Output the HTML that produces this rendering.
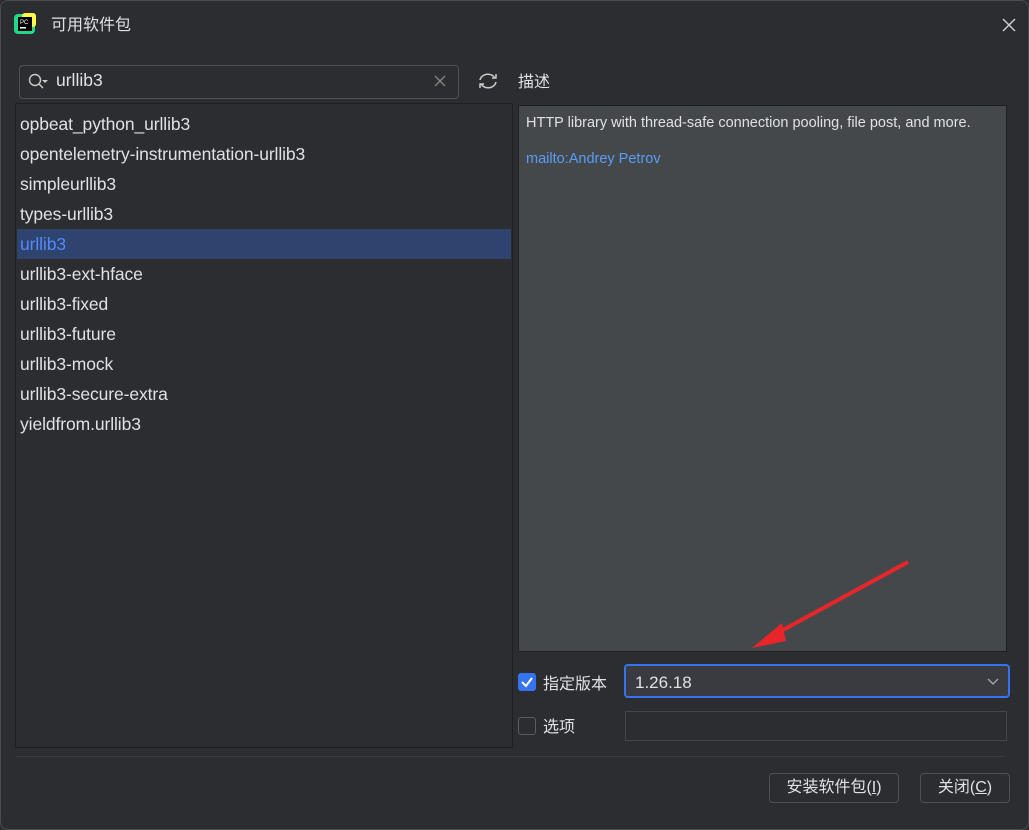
<!DOCTYPE html>
<html><head><meta charset="utf-8"><style>
*{box-sizing:border-box;margin:0;padding:0}
body{width:1029px;height:830px;background:#2b2d30;font-family:"Liberation Sans","Noto Sans CJK SC",sans-serif;color:#dfe1e5;position:relative;overflow:hidden;font-size:16px}
.a{position:absolute}
.row{position:absolute;left:1px;right:1px;height:30px;line-height:30px;padding-left:3px;font-size:17.5px;letter-spacing:-0.1px}
</style></head><body>
<div class="a" style="left:0;top:0;width:1029px;height:830px;border:1px solid #4a4c50;border-radius:8px"></div>
<svg class="a" style="left:14px;top:13px" width="22" height="22"><rect x="0" y="1" width="21" height="20" rx="4" fill="#21d789"/><rect x="8" y="0" width="14" height="14" rx="3" fill="#fcf84a"/><rect x="4" y="4" width="14" height="14" fill="#000"/><text x="6" y="11" font-size="6" fill="#fff" font-family="Liberation Sans">PC</text><rect x="6" y="14" width="6" height="1.5" fill="#fff"/></svg>
<div class="a" style="left:51px;top:11px;font-size:16px">可用软件包</div>
<svg class="a" style="left:1001px;top:17px" width="16" height="16"><path d="M2 2L14 14M14 2L2 14" stroke="#ccc" stroke-width="1.5"/></svg>
<div class="a" style="left:19px;top:65px;width:440px;height:34px;border:1px solid #4e5157;border-radius:4px;background:#2b2d30"></div>
<svg class="a" style="left:27px;top:72px" width="24" height="20"><circle cx="8" cy="8" r="5.5" stroke="#ccc" stroke-width="1.4" fill="none"/><path d="M12 12L16 16" stroke="#ccc" stroke-width="1.4"/><path d="M15 8L21 8L18 11Z" fill="#ccc"/></svg>
<div class="a" style="left:56px;top:70px;font-size:17.5px">urllib3</div>
<svg class="a" style="left:434px;top:75px" width="12" height="12"><path d="M1 1L11 11M11 1L1 11" stroke="#888" stroke-width="1.3"/></svg>
<svg class="a" style="left:477px;top:71px" width="22" height="20"><path d="M3 9A8 7 0 0 1 18 7M19 11A8 7 0 0 1 4 13" stroke="#ccc" stroke-width="1.5" fill="none"/><path d="M15 7L19 7L19 3M7 13L3 13L3 17" stroke="#ccc" stroke-width="1.5" fill="none"/></svg>
<div class="a" style="left:15px;top:103px;width:498px;height:645px;border:1px solid #1e1f22;background:#2b2d30">
<div class="row" style="top:5px">opbeat_python_urllib3</div>
<div class="row" style="top:35px">opentelemetry-instrumentation-urllib3</div>
<div class="row" style="top:65px">simpleurllib3</div>
<div class="row" style="top:95px">types-urllib3</div>
<div class="row" style="top:125px;background:#2e436e;color:#548af7">urllib3</div>
<div class="row" style="top:155px">urllib3-ext-hface</div>
<div class="row" style="top:185px">urllib3-fixed</div>
<div class="row" style="top:215px">urllib3-future</div>
<div class="row" style="top:245px">urllib3-mock</div>
<div class="row" style="top:275px">urllib3-secure-extra</div>
<div class="row" style="top:305px">yieldfrom.urllib3</div>
</div>
<div class="a" style="left:518px;top:68px;font-size:16px">描述</div>
<div class="a" style="left:518px;top:105px;width:489px;height:547px;background:#45484a;border:1px solid #1e1f22;padding:9px 7px;font-size:14.5px">
<div>HTTP library with thread-safe connection pooling, file post, and more.</div>
<div style="color:#589df6;margin-top:20px">mailto:Andrey Petrov</div>
</div>
<svg class="a" style="left:740px;top:555px" width="180" height="100"><path d="M168 7L30 82" stroke="#e8262a" stroke-width="4"/><path d="M12 93L42 68L46 86Z" fill="#e8262a"/></svg>
<div class="a" style="left:518px;top:673px;width:18px;height:18px;background:#3574f0;border-radius:3px"></div>
<svg class="a" style="left:518px;top:673px" width="18" height="18"><path d="M4 9L8 13L14 5" stroke="#fff" stroke-width="2" fill="none"/></svg>
<div class="a" style="left:543px;top:670px;font-size:16px">指定版本</div>
<div class="a" style="left:624px;top:664px;width:386px;height:34px;border:2px solid #3574f0;border-radius:4px;background:#393b40;padding-left:9px;line-height:34px;font-size:17px">1.26.18</div>
<svg class="a" style="left:986px;top:677px" width="14" height="10"><path d="M2 2L7 7L12 2" stroke="#aaa" stroke-width="1.3" fill="none"/></svg>
<div class="a" style="left:518px;top:717px;width:18px;height:18px;border:1px solid #5a5d63;border-radius:3px"></div>
<div class="a" style="left:543px;top:713px;font-size:16px">选项</div>
<div class="a" style="left:625px;top:711px;width:382px;height:30px;border:1px solid #43454a;background:#2b2d30"></div>
<div class="a" style="left:15px;top:756px;width:990px;height:1px;background:#393b40"></div>
<div class="a" style="left:769px;top:773px;width:130px;height:30px;border:1px solid #4e5157;border-radius:4px;text-align:center;line-height:28px;font-size:16px">安装软件包(<u>I</u>)</div>
<div class="a" style="left:920px;top:773px;width:90px;height:30px;border:1px solid #4e5157;border-radius:4px;text-align:center;line-height:28px;font-size:16px">关闭(<u>C</u>)</div>
</body></html>
